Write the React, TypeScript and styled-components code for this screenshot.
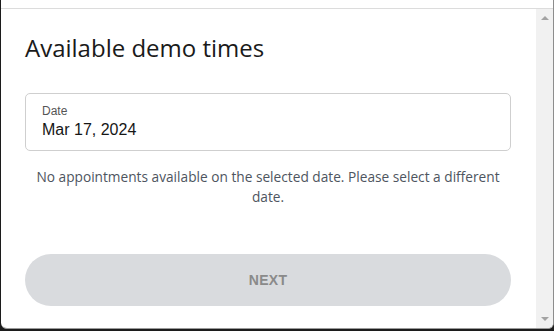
import styled, { createGlobalStyle } from 'styled-components';

const GlobalStyle = createGlobalStyle`
  * { box-sizing: border-box; }
  html, body { margin: 0; padding: 0; }
  body {
    background: #1c1c1c;
    width: 554px;
    height: 331px;
    overflow: hidden;
  }
`;

const Page = styled.div`
  width: 554px;
  height: 331px;
  padding: 0 0 2px 1px;
  display: flex;
`;

const Modal = styled.div`
  flex: 1;
  background: #fff;
  border-radius: 0 0 6px 6px;
  border-right: 1px solid #8d8d8d;
  border-bottom: 1px solid #9a9a9a;
  overflow: hidden;
  display: flex;
  flex-direction: column;
`;

const TopBar = styled.div`
  height: 9px;
  border-bottom: 1px solid #dcdcdc;
`;

const Body = styled.div`
  flex: 1;
  display: flex;
`;

const Content = styled.div`
  flex: 1;
  padding: 24px 25px 0 24px;
  display: flex;
  flex-direction: column;
`;

const Title = styled.h2`
  margin: 0;
  font-family: 'Open Sans', sans-serif;
  font-weight: 400;
  font-size: 24px;
  line-height: 30px;
  color: #1a1a1a;
`;

const Field = styled.div`
  margin-top: 30px;
  height: 58px;
  border: 1px solid #cfcfcf;
  border-radius: 5px;
  padding: 10px 16px 0;
  font-family: 'Liberation Sans', Arial, sans-serif;
`;

const Label = styled.div`
  font-size: 12px;
  line-height: 14px;
  color: #555;
`;

const Value = styled.div`
  margin-top: 3px;
  font-size: 16px;
  line-height: 18px;
  color: #161616;
`;

const Message = styled.p`
  margin: 16px 0 0;
  text-align: center;
  font-family: 'Open Sans', sans-serif;
  font-size: 13.7px;
  line-height: 20px;
  color: #4e5560;
`;

const NextButton = styled.button`
  margin-top: 47px;
  height: 52px;
  width: 100%;
  border: none;
  border-radius: 26px;
  background: #d9dbde;
  color: #8a8a8a;
  font-family: 'Liberation Sans', Arial, sans-serif;
  font-weight: 700;
  font-size: 14px;
  letter-spacing: 0.3px;
`;

const Scrollbar = styled.div`
  width: 17px;
  background: #f1f1f1;
  display: flex;
  flex-direction: column;
  justify-content: space-between;
  align-items: center;
  padding: 7px 0;
`;

const Arrow = styled.div<{ $down?: boolean }>`
  width: 0;
  height: 0;
  border-left: 4px solid transparent;
  border-right: 4px solid transparent;
  ${(p) =>
    p.$down
      ? 'border-top: 4px solid #a3a3a3;'
      : 'border-bottom: 4px solid #a3a3a3;'}
`;

export default function App() {
  return (
    <Page>
      <GlobalStyle />
      <Modal>
        <TopBar />
        <Body>
          <Content>
            <Title>Available demo times</Title>
            <Field>
              <Label>Date</Label>
              <Value>Mar 17, 2024</Value>
            </Field>
            <Message>
              No appointments available on the selected date. Please select a
              different date.
            </Message>
            <NextButton disabled>NEXT</NextButton>
          </Content>
          <Scrollbar>
            <Arrow />
            <Arrow $down />
          </Scrollbar>
        </Body>
      </Modal>
    </Page>
  );
}
